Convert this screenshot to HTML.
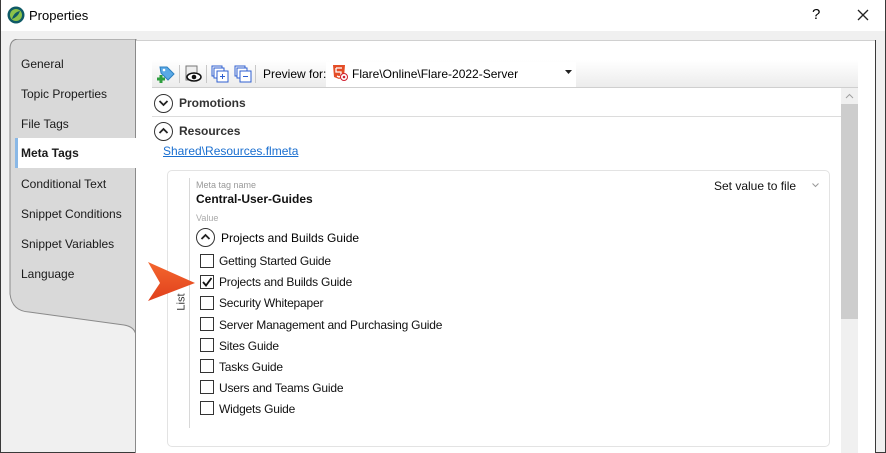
<!DOCTYPE html>
<html><head><style>
*{margin:0;padding:0;box-sizing:border-box}
body{width:886px;height:453px;overflow:hidden;background:#f0f0f0;font-family:"Liberation Sans",sans-serif;font-size:12px;color:#000;position:relative}
.abs{position:absolute}
.win{position:absolute;left:0;top:0;width:886px;height:453px;border:1px solid #3a3a3a;border-top:none}
.title{position:absolute;left:0;top:0;width:886px;height:31px;background:#fff}
.tab{position:absolute;left:21px;font-size:12px;color:#1a1a1a}
.cb{position:absolute;left:200px;width:14px;height:14px;border:1px solid #333;background:#fff}
.lbl{position:absolute;left:219px;font-size:12px;color:#111;letter-spacing:-0.2px}
.circ{position:absolute;width:19px;height:19px;border:1.5px solid #333;border-radius:50%;background:#fff}
</style></head><body>
<div class="title"></div>
<svg class="abs" style="left:7px;top:6px" width="18" height="18"><circle cx="9" cy="9" r="8.5" fill="#0f5a66"/><circle cx="9" cy="9" r="6" fill="#8bc34a"/><path d="M5 13 Q7 6 13 5 Q11 11 5 13Z" fill="#0f5a66"/></svg>
<div class="abs" style="left:29px;top:8px;font-size:13px">Properties</div>
<div class="abs" style="left:812px;top:6px;font-size:15px">?</div>
<svg class="abs" style="left:857px;top:9px" width="12" height="12"><path d="M1 1L11 11M11 1L1 11" stroke="#222" stroke-width="1.3"/></svg>
<div class="win"></div>
<svg class="abs" style="left:9px;top:39px" width="128" height="300"><path d="M127 0 L10 0 Q1 0 1 10 L1 255 Q3 272 20 273 L115 286 Q127 288 127 298 Z" fill="#d9d9d9" stroke="#8a8a8a" stroke-width="1"/></svg>
<div class="abs" style="left:135px;top:39px;width:1px;height:414px;background:#8a8a8a"></div>
<div class="tab" style="top:57px">General</div>
<div class="tab" style="top:87px">Topic Properties</div>
<div class="tab" style="top:117px">File Tags</div>
<div class="abs" style="left:15px;top:138px;width:121px;height:30px;background:#fff;border-left:3px solid #8ab8e6"></div>
<div class="tab" style="top:146px;font-weight:bold">Meta Tags</div>
<div class="tab" style="top:177px">Conditional Text</div>
<div class="tab" style="top:207px">Snippet Conditions</div>
<div class="tab" style="top:237px">Snippet Variables</div>
<div class="tab" style="top:267px">Language</div>
<div class="abs" style="left:136px;top:40px;width:739px;height:413px;background:#fff;border-top:1px solid #d0d0d0"></div>
<div class="abs" style="left:875px;top:40px;width:1px;height:413px;background:#3a3a3a"></div>
<div class="abs" style="left:152px;top:60px;width:706px;height:28px;background:linear-gradient(#fff,#ececec);border-bottom:1px solid #cfcfcf"></div>
<svg class="abs" style="left:155px;top:64px" width="22" height="20"><path d="M5 3 L12 3 L19 10 L13 16 L6 9Z" fill="#5aa9e6" stroke="#2d7fc0"/><circle cx="9" cy="6" r="1.3" fill="#fff"/><path d="M2 15h8M6 11v8" stroke="#2e9e3e" stroke-width="3"/></svg>
<div class="abs" style="left:179px;top:65px;width:1px;height:18px;background:#c8c8c8"></div>
<svg class="abs" style="left:183px;top:64px" width="20" height="20"><rect x="3" y="2" width="11" height="14" fill="#eee" stroke="#777"/><ellipse cx="11" cy="13" rx="7" ry="4" fill="#fff" stroke="#111" stroke-width="1.5"/><circle cx="11" cy="13" r="2.3" fill="#111"/></svg>
<div class="abs" style="left:206px;top:65px;width:1px;height:18px;background:#c8c8c8"></div>
<svg class="abs" style="left:210px;top:64px" width="20" height="20"><rect x="2" y="2" width="10" height="10" fill="none" stroke="#2f5fd0"/><rect x="4" y="4" width="10" height="10" fill="#fff" stroke="#2f5fd0"/><rect x="7" y="7" width="11" height="11" fill="#fff" stroke="#2f5fd0"/><path d="M10 12.5h5M12.5 10v5" stroke="#2f5fd0"/></svg>
<svg class="abs" style="left:233px;top:64px" width="20" height="20"><rect x="2" y="2" width="10" height="10" fill="none" stroke="#2f5fd0"/><rect x="4" y="4" width="10" height="10" fill="#fff" stroke="#2f5fd0"/><rect x="7" y="7" width="11" height="11" fill="#fff" stroke="#2f5fd0"/><path d="M10 12.5h5" stroke="#2f5fd0"/></svg>
<div class="abs" style="left:255px;top:65px;width:1px;height:18px;background:#c8c8c8"></div>
<div class="abs" style="left:263px;top:67px">Preview for:</div>
<div class="abs" style="left:326px;top:62px;width:250px;height:25px;background:#fff"></div>
<svg class="abs" style="left:332px;top:64px" width="16" height="18"><path d="M1 1h12l-1 12-5 2-5-2z" fill="#e44d26"/><path d="M4 4h6M4 4v4h5v4l-2 1-2-1" stroke="#fff" stroke-width="1.3" fill="none"/><circle cx="12" cy="13" r="3.5" fill="#fff" stroke="#d02030"/><circle cx="12" cy="13" r="1.3" fill="#d02030"/></svg>
<div class="abs" style="left:352px;top:67px">Flare\Online\Flare-2022-Server</div>
<svg class="abs" style="left:565px;top:70px" width="8" height="5"><path d="M0 0h7l-3.5 4z" fill="#222"/></svg>
<div class="circ" style="left:154px;top:94px"></div>
<svg class="abs" style="left:158px;top:99px" width="11" height="8"><path d="M1.5 2 L5.5 6 L9.5 2" stroke="#222" stroke-width="1.8" fill="none"/></svg>
<div class="abs" style="left:179px;top:96px;font-weight:bold;color:#333">Promotions</div>
<div class="abs" style="left:152px;top:116px;width:689px;height:1px;background:#dcdcdc"></div>
<div class="circ" style="left:154px;top:122px"></div>
<svg class="abs" style="left:158px;top:127px" width="11" height="8"><path d="M1.5 6 L5.5 2 L9.5 6" stroke="#222" stroke-width="1.8" fill="none"/></svg>
<div class="abs" style="left:179px;top:124px;font-weight:bold;color:#333">Resources</div>
<div class="abs" style="left:163px;top:144px;color:#1a6fd0;text-decoration:underline">Shared\Resources.flmeta</div>
<div class="abs" style="left:841px;top:88px;width:17px;height:365px;background:#f0f0f0"></div>
<div class="abs" style="left:841px;top:104px;width:17px;height:215px;background:#cdcdcd"></div>
<svg class="abs" style="left:845px;top:93px" width="9" height="6"><path d="M1 5L4.5 1.5L8 5" stroke="#a0a0a0" fill="none"/></svg>
<div class="abs" style="left:167px;top:170px;width:663px;height:277px;border:1px solid #e3e3e3;border-radius:5px;background:#fff"></div>
<div class="abs" style="left:189px;top:178px;width:1px;height:250px;background:#d8d8d8"></div>
<div class="abs" style="left:173px;top:296px;transform:rotate(-90deg);font-size:11px;color:#333">List</div>
<div class="abs" style="left:196px;top:180px;font-size:9px;color:#999">Meta tag name</div>
<div class="abs" style="left:196px;top:192px;font-weight:bold;color:#111">Central-User-Guides</div>
<div class="abs" style="left:196px;top:213px;font-size:9px;color:#aaa">Value</div>
<div class="abs" style="left:714px;top:179px;color:#111">Set value to file</div>
<svg class="abs" style="left:812px;top:183px" width="7" height="5"><path d="M0.5 0.5L3.5 3.5L6.5 0.5" stroke="#999" fill="none"/></svg>
<div class="circ" style="left:196px;top:228px"></div>
<svg class="abs" style="left:200px;top:233px" width="11" height="8"><path d="M1.5 6 L5.5 2 L9.5 6" stroke="#222" stroke-width="1.8" fill="none"/></svg>
<div class="abs" style="left:221px;top:231px">Projects and Builds Guide</div>
<div class="cb" style="top:254px"></div><div class="lbl" style="top:254px">Getting Started Guide</div>
<div class="cb" style="top:275px"></div><div class="lbl" style="top:275px">Projects and Builds Guide</div>
<svg class="abs" style="left:201px;top:276px" width="12" height="12"><path d="M2 6L5 9.5L10.5 2" stroke="#111" stroke-width="1.8" fill="none"/></svg>
<div class="cb" style="top:296px"></div><div class="lbl" style="top:296px">Security Whitepaper</div>
<div class="cb" style="top:317px"></div><div class="lbl" style="top:318px">Server Management and Purchasing Guide</div>
<div class="cb" style="top:338px"></div><div class="lbl" style="top:339px">Sites Guide</div>
<div class="cb" style="top:359px"></div><div class="lbl" style="top:360px">Tasks Guide</div>
<div class="cb" style="top:380px"></div><div class="lbl" style="top:381px">Users and Teams Guide</div>
<div class="cb" style="top:401px"></div><div class="lbl" style="top:402px">Widgets Guide</div>
<svg class="abs" style="left:144px;top:260px" width="56" height="44"><defs><linearGradient id="g" x1="0" y1="0" x2="0" y2="1"><stop offset="0" stop-color="#f4662e"/><stop offset="1" stop-color="#e0401c"/></linearGradient></defs><path d="M4 2 L51 23 L4 41 L16 23 Z" fill="url(#g)"/></svg>
</body></html>
